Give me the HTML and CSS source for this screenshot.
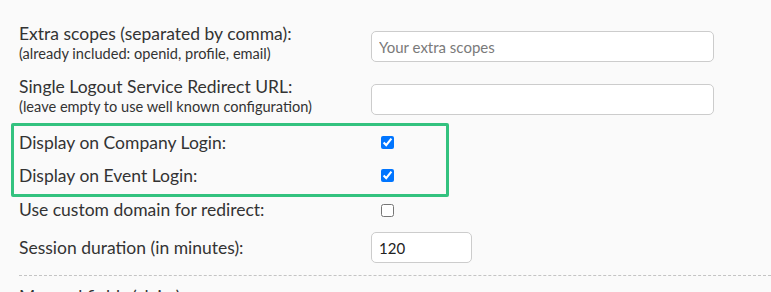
FILE: index.html
```html
<!DOCTYPE html>
<html lang="en">
<head>
<meta charset="utf-8">
<title>SSO settings</title>
<link rel="stylesheet" href="styles.css">
</head>
<body>
<div class="form">
  <div class="row row-tall">
    <label class="lbl" for="scopes">
      <span class="main">Extra scopes (separated by comma):</span>
      <span class="sub">(already included: openid, profile, email)</span>
    </label>
    <div class="ctl"><input id="scopes" class="text wide" type="text" placeholder="Your extra scopes"></div>
  </div>
  <div class="row row-tall">
    <label class="lbl" for="slo">
      <span class="main">Single Logout Service Redirect URL:</span>
      <span class="sub">(leave empty to use well known configuration)</span>
    </label>
    <div class="ctl"><input id="slo" class="text wide" type="text"></div>
  </div>
  <div class="highlight">
    <div class="row row-check">
      <label class="lbl" for="company"><span class="main">Display on Company Login:</span></label>
      <div class="ctl"><input id="company" class="check" type="checkbox" checked></div>
    </div>
    <div class="row row-check">
      <label class="lbl" for="event"><span class="main">Display on Event Login:</span></label>
      <div class="ctl"><input id="event" class="check" type="checkbox" checked></div>
    </div>
  </div>
  <div class="row row-custom">
    <label class="lbl" for="custom"><span class="main">Use custom domain for redirect:</span></label>
    <div class="ctl"><input id="custom" class="check" type="checkbox"></div>
  </div>
  <div class="row row-session">
    <label class="lbl" for="session"><span class="main">Session duration (in minutes):</span></label>
    <div class="ctl"><input id="session" class="text short" type="text" value="120"></div>
  </div>
  <div class="sep"></div>
  <h3 class="section">Mapped fields (claim)</h3>
</div>
</body>
</html>
```

FILE: styles.css
```css
html, body {
  margin: 0;
  padding: 0;
  background: #fafafa;
  overflow: hidden;
}
body {
  font-family: Lato, "Open Sans", sans-serif;
  color: #333;
  height: 292px;
}
.form {
  padding: 24px 0 0 11px;
}
.row {
  display: grid;
  grid-template-columns: 352px 1fr;
  padding-left: 8px;
}
.lbl {
  display: flex;
  flex-direction: column;
}
.main {
  font-size: 17.5px;
  line-height: 20px;
}
.sub {
  font-size: 14.6px;
  line-height: 19px;
}
.row-tall {
  height: 53px;
  align-items: start;
}
.row-tall .text {
  margin-top: 7px;
}
.text {
  box-sizing: border-box;
  height: 31px;
  border: 1px solid #cccccc;
  border-radius: 5px;
  background: #fff;
  padding: 0 7px;
  font-family: Lato, "Open Sans", sans-serif;
  font-size: 15px;
  color: #222;
  outline: none;
  display: block;
}
.text::placeholder {
  color: #7a7a7a;
}
.wide {
  width: 343px;
}
.short {
  width: 101px;
}
.highlight {
  margin-top: -7px;
  width: 438px;
  box-sizing: border-box;
  border: 3px solid #33c27f;
  border-radius: 2px;
  padding: 0 0 2px 0;
}
.highlight .row {
  padding-left: 5px;
}
.row-check {
  height: 33px;
  align-items: center;
}
.ctl {
  display: flex;
  align-items: center;
}
.check {
  margin: 0 0 0 10px;
  width: 13px;
  height: 13px;
}
.row-custom {
  height: 26px;
  align-items: center;
}
.row-session {
  margin-top: 9px;
  height: 31px;
  align-items: center;
}
.sep {
  margin: 12px 0 0 8px;
  border-top: 1px dashed #c4c4c4;
}
.section {
  margin: 11px 0 0 8px;
  font-size: 17.5px;
  line-height: 20px;
  font-weight: normal;
}
```
